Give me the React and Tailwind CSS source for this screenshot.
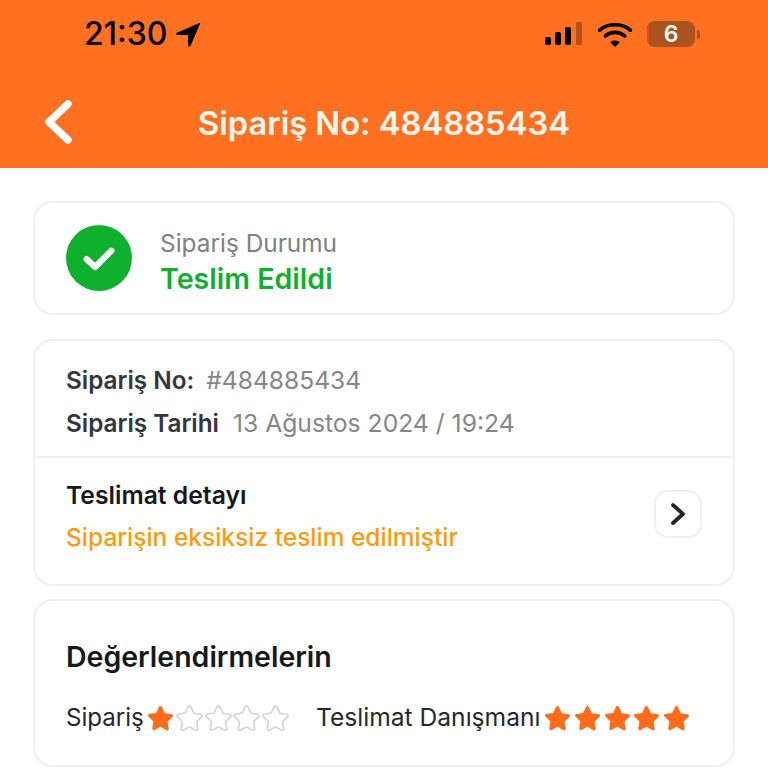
import React from 'react';

const STAR = "M12 1.8c.5 0 .9.3 1.2.8l2.7 5.6 6 .9c1.2.2 1.6 1.5.8 2.3l-4.4 4.3 1 6.1c.2 1.2-1 2-2 1.5L12 20.3l-5.3 2.8c-1 .5-2.2-.3-2-1.5l1-6.1-4.4-4.3c-.8-.8-.4-2.1.8-2.3l6-.9 2.7-5.6c.3-.5.7-.9 1.2-.8z";

function Star({ filled }) {
  return (
    <svg viewBox="0 0 24 24" className="w-[27px] h-[27px] shrink-0">
      <path
        d={STAR}
        fill={filled ? "#ff6b1a" : "#ffffff"}
        stroke={filled ? "#ff6b1a" : "#d4d4d4"}
        strokeWidth={filled ? 0 : 1.5}
      />
    </svg>
  );
}

function StatusBar() {
  return (
    <div className="flex items-center justify-between h-[68px] pl-[84px] pr-[68px]">
      <div className="flex items-center gap-[9px]">
        <span className="text-[32px] leading-none font-medium text-black">21:30</span>
        <svg viewBox="0 0 24 24" className="w-[25px] h-[25px]">
          <path d="M23.500.5.900 10.200c-1.400.6-1 2.300.5 2.300H11.500v9.800c0 1.400 1.900 1.800 2.500.5L23.500.5z" fill="#000" />
        </svg>
      </div>
      <div className="flex items-center gap-[14px]">
        <svg viewBox="0 0 40 24" className="w-[40px] h-[24px] -mr-[1px]">
          <rect x="1" y="15" width="6" height="8" rx="2" fill="#000" />
          <rect x="11" y="10" width="6" height="13" rx="2" fill="#000" />
          <rect x="21" y="5" width="6" height="18" rx="2" fill="#000" />
          <rect x="32" y="0" width="6" height="23" rx="1" fill="#000" fillOpacity="0.28" />
        </svg>
        <svg viewBox="0 0 36 26" className="w-[36px] h-[25px]">
          <path d="M18 26 13 21c2.800-2.300 7.200-2.300 10 0z" fill="#000" />
          <path d="M2 8.500C10.500 1 25.500 1 34 8.500" fill="none" stroke="#000" strokeWidth="3.800" strokeLinecap="round" />
          <path d="M8 14.500c5.800-5 14.200-5 20 0" fill="none" stroke="#000" strokeWidth="3.800" strokeLinecap="round" />
        </svg>
        <div className="flex items-center">
          <div className="relative w-[48px] h-[26px] rounded-[8px] bg-[#a9531f] flex items-center justify-center text-white text-[23px] font-semibold leading-none">
            <div className="absolute left-0 top-[5px] bottom-[5px] w-[2px] bg-[#e8432b]" />
            6
          </div>
          <div className="w-[3px] h-[9px] ml-[2px] rounded-r-full bg-[#a9531f]" />
        </div>
      </div>
    </div>
  );
}

export default function App() {
  return (
    <div className="w-[768px] h-[768px] overflow-hidden bg-white font-['Inter',sans-serif]">
      <div className="h-[168px] bg-[#ff7020] border-b border-[#ff7020]">
        <StatusBar />
        <div className="relative flex items-center justify-center h-[100px] pt-[10px]">
          <svg viewBox="0 0 28 44" className="absolute left-[44px] top-[32px] w-[28px] h-[44px]">
            <path d="M24 4 5 22l19 18" fill="none" stroke="#fff" strokeWidth="7.500" strokeLinecap="round" strokeLinejoin="round" />
          </svg>
          <h1 className="text-[32.7px] leading-none font-semibold text-[#fff5ee]">Sipariş No: 484885434</h1>
        </div>
      </div>

      <div className="flex flex-col px-[33px] pt-[33px]">
        <div className="flex items-center gap-[28px] h-[114px] pl-[31px] rounded-[20px] border-2 border-[#f0f0f0]">
          <div className="flex items-center justify-center w-[66px] h-[66px] rounded-full bg-[#0fb02e]">
            <svg viewBox="0 0 32 32" className="w-[36px] h-[36px]">
              <path d="m5 17 7.500 7L27 9.500" fill="none" stroke="#fff" strokeWidth="5.500" strokeLinecap="round" strokeLinejoin="round" />
            </svg>
          </div>
          <div className="flex flex-col gap-[4px] pt-[8px]">
            <span className="text-[24.4px] leading-[30px] text-[#808085]">Sipariş Durumu</span>
            <span className="text-[28.6px] leading-[34px] font-semibold text-[#0fb02e]">Teslim Edildi</span>
          </div>
        </div>

        <div className="mt-[24px] h-[247px] rounded-[20px] border-2 border-[#f0f0f0]">
          <div className="flex flex-col gap-[14px] h-[117px] pl-[31px] pt-[25px] border-b-2 border-[#f0f0f0] leading-[29px]">
            <div className="flex gap-[12px]">
              <span className="text-[24.3px] font-semibold text-[#33363d]">Sipariş No:</span>
              <span className="text-[24.6px] text-[#85858a]">#484885434</span>
            </div>
            <div className="flex gap-[14px]">
              <span className="text-[24.3px] font-semibold text-[#33363d]">Sipariş Tarihi</span>
              <span className="text-[24.7px] text-[#85858a]">13 Ağustos 2024 / 19:24</span>
            </div>
          </div>
          <div className="flex items-start justify-between pl-[31px] pr-[31px] pt-[23px]">
            <div className="flex flex-col gap-[13px]">
              <span className="text-[24.7px] leading-[29px] font-semibold text-[#17181c]">Teslimat detayı</span>
              <span className="text-[24.5px] leading-[29px] font-medium text-[#ff9a0f]">Siparişin eksiksiz teslim edilmiştir</span>
            </div>
            <div className="flex items-center justify-center w-[48px] h-[48px] mt-[9px] rounded-[14px] border-2 border-[#f0f0f0]">
              <svg viewBox="0 0 16 24" className="w-[16px] h-[24px]">
                <path d="m3 3 10 9-10 9" fill="none" stroke="#222428" strokeWidth="3.800" strokeLinecap="round" strokeLinejoin="round" />
              </svg>
            </div>
          </div>
        </div>

        <div className="mt-[13px] h-[168px] pl-[31px] pt-[39px] rounded-[20px] border-2 border-[#f0f0f0]">
          <h2 className="text-[28.5px] leading-[34px] font-semibold text-[#17181c]">Değerlendirmelerin</h2>
          <div className="flex items-center mt-[29px] leading-[29px] text-[#26282d]">
            <span className="text-[24.1px]">Sipariş</span>
            <div className="flex gap-[1.7px] ml-[3.5px]">
              {[1, 2, 3, 4, 5].map((n) => <Star key={n} filled={n <= 1} />)}
            </div>
            <span className="ml-[27px] text-[24.6px]">Teslimat Danışmanı</span>
            <div className="flex gap-[2.6px] ml-[4px]">
              {[1, 2, 3, 4, 5].map((n) => <Star key={n} filled />)}
            </div>
          </div>
        </div>
      </div>
    </div>
  );
}
